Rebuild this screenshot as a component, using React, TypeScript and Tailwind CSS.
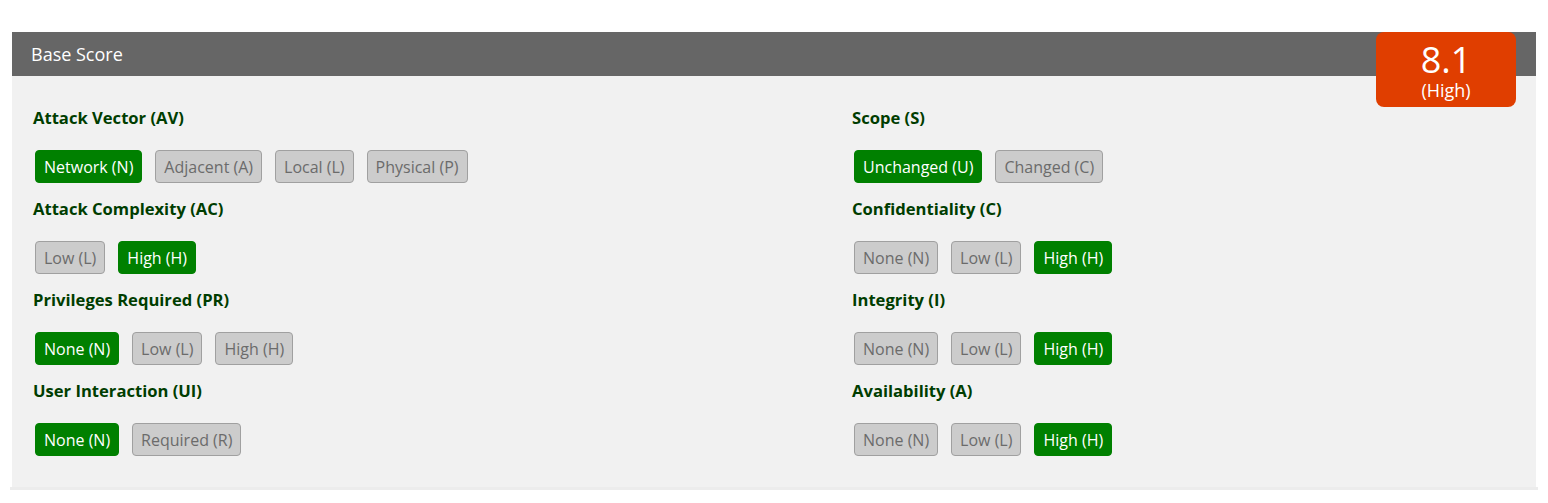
import React from "react";

// ─── Metric Definitions ───────────────────────────────────

interface Metric {
  label: string;
  options: string[];
  selected: number;
}

const LEFT: Metric[] = [
  { label: "Attack Vector (AV)", options: ["Network (N)", "Adjacent (A)", "Local (L)", "Physical (P)"], selected: 0 },
  { label: "Attack Complexity (AC)", options: ["Low (L)", "High (H)"], selected: 1 },
  { label: "Privileges Required (PR)", options: ["None (N)", "Low (L)", "High (H)"], selected: 0 },
  { label: "User Interaction (UI)", options: ["None (N)", "Required (R)"], selected: 0 },
];

const RIGHT: Metric[] = [
  { label: "Scope (S)", options: ["Unchanged (U)", "Changed (C)"], selected: 0 },
  { label: "Confidentiality (C)", options: ["None (N)", "Low (L)", "High (H)"], selected: 2 },
  { label: "Integrity (I)", options: ["None (N)", "Low (L)", "High (H)"], selected: 2 },
  { label: "Availability (A)", options: ["None (N)", "Low (L)", "High (H)"], selected: 2 },
];

function MetricGroup({ metric }: { metric: Metric }) {
  return (
    <div className="flex flex-col">
      <div className="text-[16.6px] leading-[22px] font-bold text-[#003d00]">{metric.label}</div>
      <div className="flex gap-[13px] mt-[21px] pl-[2px]">
        {metric.options.map((opt, i) => {
          const active = i === metric.selected;
          return (
            <button
              key={opt}
              className={
                active
                  ? "h-[33px] px-[8px] rounded-[4px] border border-[#008000] bg-[#008000] text-white text-[16px] leading-none"
                  : "h-[33px] px-[8px] rounded-[4px] border border-[#a0a0a0] bg-[#cccccc] text-[#6b6b6b] text-[16px] leading-none"
              }
            >
              {opt}
            </button>
          );
        })}
      </div>
    </div>
  );
}

// ─── Component ────────────────────────────────────────────

export default function App() {
  return (
    <div className="bg-white min-h-[503px] pt-[32px] px-[12px]" style={{ fontFamily: '"Open Sans", sans-serif' }}>
      <div className="relative">
        <div className="h-[44px] bg-[#666666] text-white text-[18px] pl-[19px] flex items-center">Base Score</div>

        {/* Score badge */}
        <div className="absolute top-0 right-[20px] w-[140px] h-[75px] rounded-[8px] bg-[#e03e00] text-white flex flex-col items-center">
          <span className="text-[36px] leading-[34px] mt-[11px]">8.1</span>
          <span className="text-[18px] leading-[20px] mt-[3px]">(High)</span>
        </div>

        <div className="bg-[#f1f1f1] pl-[21px] pt-[31px] pb-[31px] flex">
          <div className="w-[819px] flex flex-col gap-[15px]">
            {LEFT.map((m) => (
              <MetricGroup key={m.label} metric={m} />
            ))}
          </div>
          <div className="flex flex-col gap-[15px]">
            {RIGHT.map((m) => (
              <MetricGroup key={m.label} metric={m} />
            ))}
          </div>
        </div>
        <div className="h-[3px] -mx-[2px] bg-[#ececec]" />
      </div>
    </div>
  );
}
